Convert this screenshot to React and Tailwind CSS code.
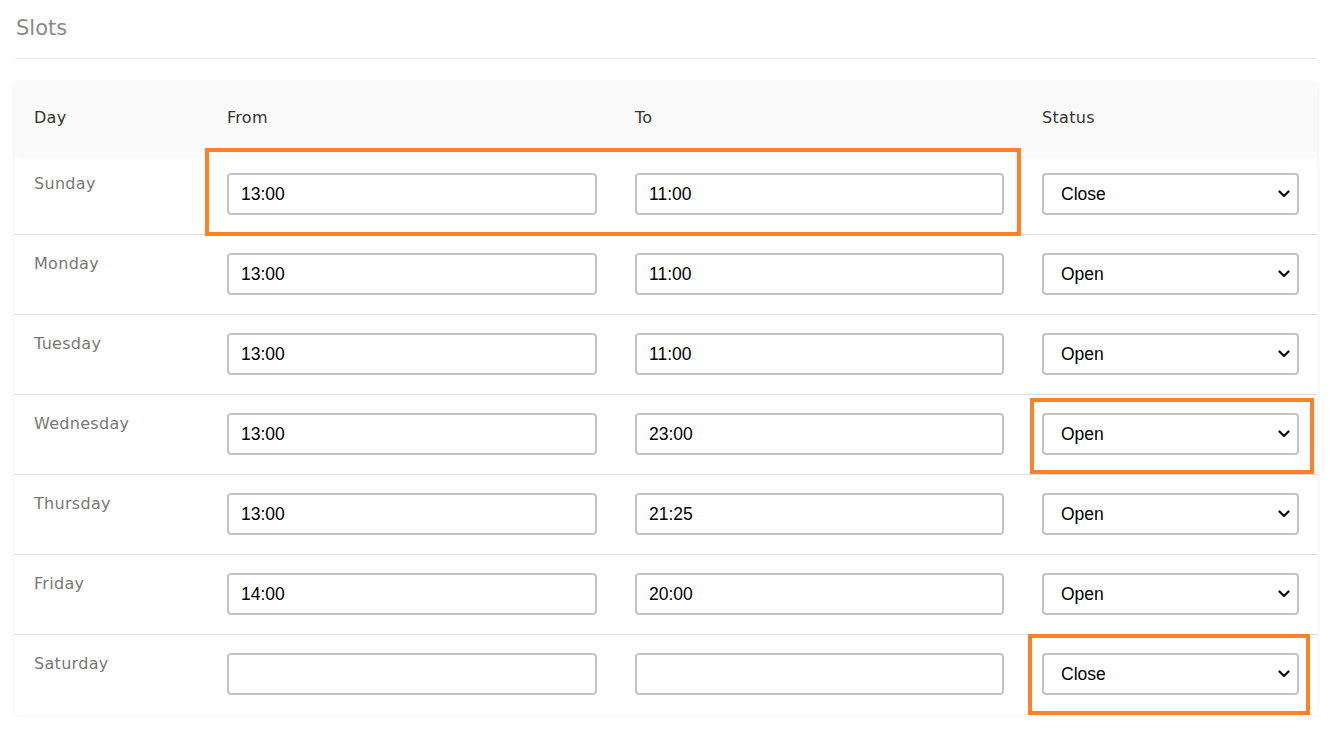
import { useState } from 'react';

const initialSlots = [
  { day: 'Sunday', from: '13:00', to: '11:00', status: 'Close' },
  { day: 'Monday', from: '13:00', to: '11:00', status: 'Open' },
  { day: 'Tuesday', from: '13:00', to: '11:00', status: 'Open' },
  { day: 'Wednesday', from: '13:00', to: '23:00', status: 'Open' },
  { day: 'Thursday', from: '13:00', to: '21:25', status: 'Open' },
  { day: 'Friday', from: '14:00', to: '20:00', status: 'Open' },
  { day: 'Saturday', from: '', to: '', status: 'Close' },
];

const labelFont = "font-['DejaVu_Sans',sans-serif]";
const fieldClass =
  "w-full h-[42px] border-2 border-[#c4c4c4] rounded-[4px] bg-white pr-3 text-[17.5px] text-black font-['Liberation_Sans',Arial,sans-serif] outline-none";

function Chevron() {
  return (
    <svg className="pointer-events-none absolute right-[9px] top-1/2 -translate-y-1/2" width="12" height="8" viewBox="0 0 12 8" fill="none">
      <path d="M1.5 1.5 6 6l4.5-4.5" stroke="#111" strokeWidth="2.2" strokeLinecap="round" strokeLinejoin="round" />
    </svg>
  );
}

export default function App() {
  const [slots, setSlots] = useState(initialSlots);

  const update = (i, key, value) => {
    setSlots((prev) => prev.map((s, idx) => (idx === i ? { ...s, [key]: value } : s)));
  };

  return (
    <div className="min-h-screen bg-white pl-[15px] pr-[13px] pt-[14px]">
      <h2 className={`${labelFont} text-[21px] leading-[28px] text-[#8a8a8a] pl-px pb-[16px] border-b border-[#e8e8e8]`}>Slots</h2>

      <div className="relative mt-[25px]">
        <div className="bg-white shadow-[0_0_6px_rgba(0,0,0,0.06)]">
          {/* Header */}
          <div className={`${labelFont} grid grid-cols-[193px_408px_407px_1fr] h-[71px] pb-[3px] items-center bg-[#fafafa] shadow-[0_3px_5px_rgba(0,0,0,0.03)] text-[16px] tracking-[0.3px] text-[#333]`}>
            <div className="pl-[19px]">Day</div>
            <div className="pl-[19px]">From</div>
            <div className="pl-[19px]">To</div>
            <div className="pl-[19px]">Status</div>
          </div>

          {/* Rows */}
          {slots.map((s, i) => (
            <div
              key={s.day}
              className={`grid grid-cols-[193px_408px_407px_1fr] h-[80px] ${i < slots.length - 1 ? 'border-b border-[#dcdcdc]' : ''}`}
            >
              <div className={`${labelFont} pl-[19px] pt-[18px] text-[16px] tracking-[0.3px] leading-[22px] text-[#777]`}>{s.day}</div>
              <div className="px-[19px] pt-[18px]">
                <input className={`${fieldClass} pl-[12px]`} value={s.from} onChange={(e) => update(i, 'from', e.target.value)} />
              </div>
              <div className="px-[19px] pt-[18px]">
                <input className={`${fieldClass} pl-[12px]`} value={s.to} onChange={(e) => update(i, 'to', e.target.value)} />
              </div>
              <div className="pl-[19px] pr-[18px] pt-[18px]">
                <div className="relative">
                  <select
                    className={`${fieldClass} pl-[17px] appearance-none`}
                    value={s.status}
                    onChange={(e) => update(i, 'status', e.target.value)}
                  >
                    <option>Open</option>
                    <option>Close</option>
                  </select>
                  <Chevron />
                </div>
              </div>
            </div>
          ))}
        </div>

        {/* Highlight annotations */}
        <div className="pointer-events-none absolute left-[190px] top-[64px] w-[816px] h-[88px] border-4 border-[#fd8227]" />
        <div className="pointer-events-none absolute left-[1015px] top-[314px] w-[284px] h-[76px] border-4 border-[#fd8227]" />
        <div className="pointer-events-none absolute left-[1013px] top-[550px] w-[282px] h-[81px] border-4 border-[#fd8227]" />
      </div>
    </div>
  );
}
